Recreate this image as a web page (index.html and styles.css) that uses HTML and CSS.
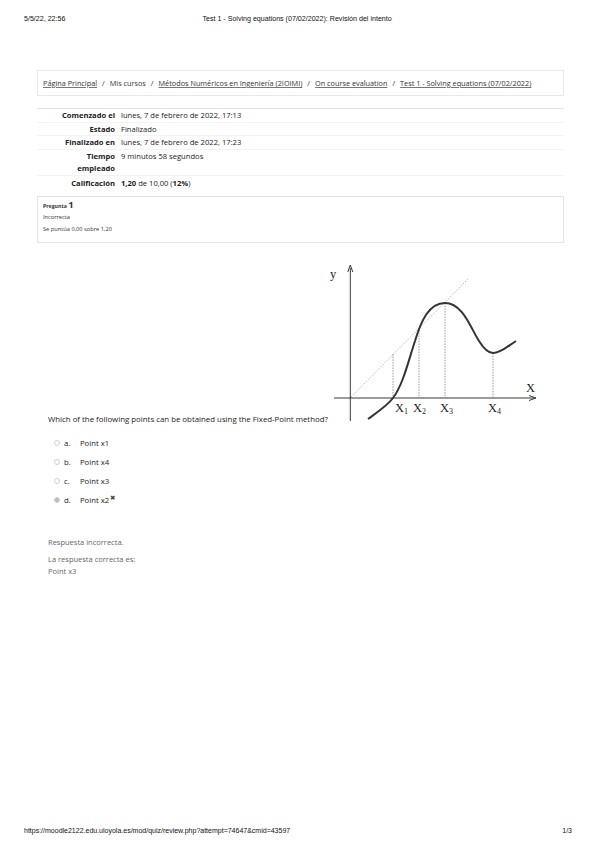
FILE: index.html
```html
<!DOCTYPE html>
<html lang="es">
<head>
<meta charset="utf-8">
<title>Test 1 - Solving equations (07/02/2022): Revisión del intento</title>
<link rel="stylesheet" href="styles.css">
</head>
<body>
<div class="page">
  <header class="print-head">
    <span class="ph-date">5/5/22, 22:56</span>
    <span class="ph-title">Test 1 - Solving equations (07/02/2022): Revisión del intento</span>
  </header>

  <main class="content">
    <nav class="crumbs">
      <a href="#">Página Principal</a><span class="sep">/</span><span>Mis cursos</span><span class="sep">/</span><a href="#">Métodos Numéricos en Ingeniería (2IOIMI)</a><span class="sep">/</span><a href="#">On course evaluation</a><span class="sep">/</span><a href="#">Test 1 - Solving equations (07/02/2022)</a>
    </nav>

    <table class="summary">
      <tr><th>Comenzado el</th><td>lunes, 7 de febrero de 2022, 17:13</td></tr>
      <tr><th>Estado</th><td>Finalizado</td></tr>
      <tr><th>Finalizado en</th><td>lunes, 7 de febrero de 2022, 17:23</td></tr>
      <tr><th>Tiempo<br>empleado</th><td>9 minutos 58 segundos</td></tr>
      <tr class="last"><th>Calificación</th><td><b>1,20</b> de 10,00 (<b>12%</b>)</td></tr>
    </table>

    <div class="qinfo">
      <div class="qno">Pregunta <span class="qnum">1</span></div>
      <div class="qstate">Incorrecta</div>
      <div class="qgrade">Se puntúa 0,00 sobre 1,20</div>
    </div>

    <div class="qtext">
      <span class="qline">Which of the following points can be obtained using the Fixed-Point method?</span><svg class="graph" width="212" height="166" viewBox="0 0 212 166" xmlns="http://www.w3.org/2000/svg">
        <g transform="translate(-329,-262)">
          <line x1="349.3" y1="269" x2="349.3" y2="422" stroke="#222" stroke-width="0.9"/>
          <path d="M346.8 273 L349.3 266 L351.8 273" fill="none" stroke="#222" stroke-width="0.9"/>
          <line x1="333" y1="399" x2="533" y2="399" stroke="#222" stroke-width="0.9"/>
          <path d="M528 396.5 L535 399 L528 401.5" fill="none" stroke="#222" stroke-width="0.9"/>
          <line x1="350" y1="398" x2="467" y2="280" stroke="#888" stroke-width="0.6" stroke-dasharray="1.5 1.5"/>
          <line x1="392" y1="355" x2="392" y2="399" stroke="#555" stroke-width="0.6" stroke-dasharray="1.5 1.2"/>
          <line x1="418" y1="331" x2="418" y2="399" stroke="#555" stroke-width="0.6" stroke-dasharray="1.5 1.2"/>
          <line x1="444" y1="304" x2="444" y2="399" stroke="#555" stroke-width="0.6" stroke-dasharray="1.5 1.2"/>
          <line x1="492" y1="354" x2="492" y2="399" stroke="#555" stroke-width="0.6" stroke-dasharray="1.5 1.2"/>
          <path d="M367 420 C378 412 387 406 392 399 C402 386 408 360 414 342 C420 322 428 304 444 304 C462 304 470 330 478 342 C483 350 487 354 492 354 C500 354 507 347 515 342" fill="none" stroke="#333" stroke-width="2"/>
          <text x="329" y="279" class="gl">y</text>
          <text x="525" y="393" class="gl">X</text>
          <text x="394" y="413" class="gl">X<tspan class="sub" dy="2">1</tspan></text>
          <text x="412" y="413" class="gl">X<tspan class="sub" dy="2">2</tspan></text>
          <text x="439" y="413" class="gl">X<tspan class="sub" dy="2">3</tspan></text>
          <text x="487" y="413" class="gl">X<tspan class="sub" dy="2">4</tspan></text>
        </g>
      </svg>
    </div>

    <div class="answers">
      <div class="ans"><span class="radio"></span><span class="al">a.</span><span>Point x1</span></div>
      <div class="ans"><span class="radio"></span><span class="al">b.</span><span>Point x4</span></div>
      <div class="ans"><span class="radio"></span><span class="al">c.</span><span>Point x3</span></div>
      <div class="ans"><span class="radio checked"></span><span class="al">d.</span><span>Point x2</span><span class="wrong">&#x2716;&#xFE0E;</span></div>
    </div>

    <div class="feedback">
      <div class="fb1">Respuesta incorrecta.</div>
      <div>La respuesta correcta es:</div>
      <div>Point x3</div>
    </div>
  </main>

  <footer class="print-foot">
    <span>https://moodle2122.edu.uloyola.es/mod/quiz/review.php?attempt=74647&amp;cmid=43597</span>
    <span>1/3</span>
  </footer>
</div>
</body>
</html>
```
FILE: styles.css
```css
html, body {
  margin: 0;
  padding: 0;
  background: #fff;
}
.page {
  width: 599px;
  height: 848px;
  display: flex;
  flex-direction: column;
  font-family: "Open Sans", "Noto Sans", sans-serif;
  color: #222;
}
.print-head {
  display: flex;
  padding: 15px 24px 0 24px;
  height: 12px;
  font-family: "Liberation Sans", Arial, sans-serif;
  font-size: 7.1px;
  color: #111;
}
.ph-title {
  margin-left: 137px;
}
.content {
  margin: 43px 35px 0 37px;
  font-size: 7.8px;
}
.crumbs {
  border: 1px solid #e8e8e8;
  height: 24px;
  display: flex;
  align-items: center;
  padding-left: 5px;
  font-size: 7.3px;
  color: #333;
  white-space: nowrap;
}
.crumbs a {
  color: #333;
  text-decoration: underline;
  text-decoration-color: #777;
}
.crumbs .sep {
  margin: 0 5px;
}
.summary {
  margin-top: 12px;
  width: 100%;
  border-collapse: collapse;
  border-top: 1px solid #e2e2e2;
  color: #222;
  font-size: 7.6px;
}
.summary th, .summary td {
  border-bottom: 1px solid #f3f3f3;
  padding: 0;
  line-height: 12.5px;
  vertical-align: top;
  text-align: left;
}
.summary th {
  width: 78px;
  text-align: right;
  font-weight: 700;
  padding-right: 6px;
}
.summary tr.last th, .summary tr.last td {
  border-bottom: none;
  padding-top: 1.5px;
  padding-bottom: 4px;
}
.qinfo {
  margin-top: 2px;
  border: 1px solid #e3e3e3;
  height: 42px;
  padding: 3px 4px 0 5px;
  font-size: 5.7px;
  color: #333;
}
.qno {
  font-weight: 700;
  font-size: 5.2px;
  line-height: 9px;
}
.qnum {
  font-size: 9.5px;
}
.qstate {
  line-height: 12px;
}
.qgrade {
  line-height: 12px;
}
.qtext {
  margin-top: 18px;
  margin-left: 11px;
  display: flex;
  align-items: flex-end;
  font-size: 7.85px;
  color: #222;
}
.qline {
  padding-bottom: 3px;
  white-space: nowrap;
}
.graph {
  display: block;
  margin-left: 2px;
}
.gl {
  font-family: "Liberation Serif", "DejaVu Serif", serif;
  font-size: 12.5px;
  fill: #222;
}
.gl .sub {
  font-size: 8px;
}
.answers {
  margin-top: 12px;
  margin-left: 17px;
  display: flex;
  flex-direction: column;
  gap: 10.5px;
  font-size: 7.7px;
  color: #222;
}
.ans {
  display: flex;
  align-items: center;
  height: 8.5px;
}
.radio {
  width: 6px;
  height: 6px;
  border: 0.6px solid #cfcfcf;
  border-radius: 50%;
  margin-right: 4px;
  box-sizing: border-box;
  display: inline-block;
}
.radio.checked {
  background: radial-gradient(circle, #bbb 0 1.6px, transparent 1.9px);
  border-color: #c8c8c8;
}
.al {
  width: 16px;
}
.wrong {
  font-family: "DejaVu Sans", sans-serif;
  font-size: 6.5px;
  margin-left: 1px;
  position: relative;
  top: -1.5px;
  color: #444;
}
.feedback {
  margin-top: 32px;
  margin-left: 11px;
  font-size: 7.5px;
  color: #666;
  line-height: 12px;
}
.fb1 {
  margin-bottom: 5px;
}
.print-foot {
  margin-top: auto;
  display: flex;
  justify-content: space-between;
  padding: 0 27px 14px 24px;
  font-family: "Liberation Sans", Arial, sans-serif;
  font-size: 7px;
  color: #111;
}
```
